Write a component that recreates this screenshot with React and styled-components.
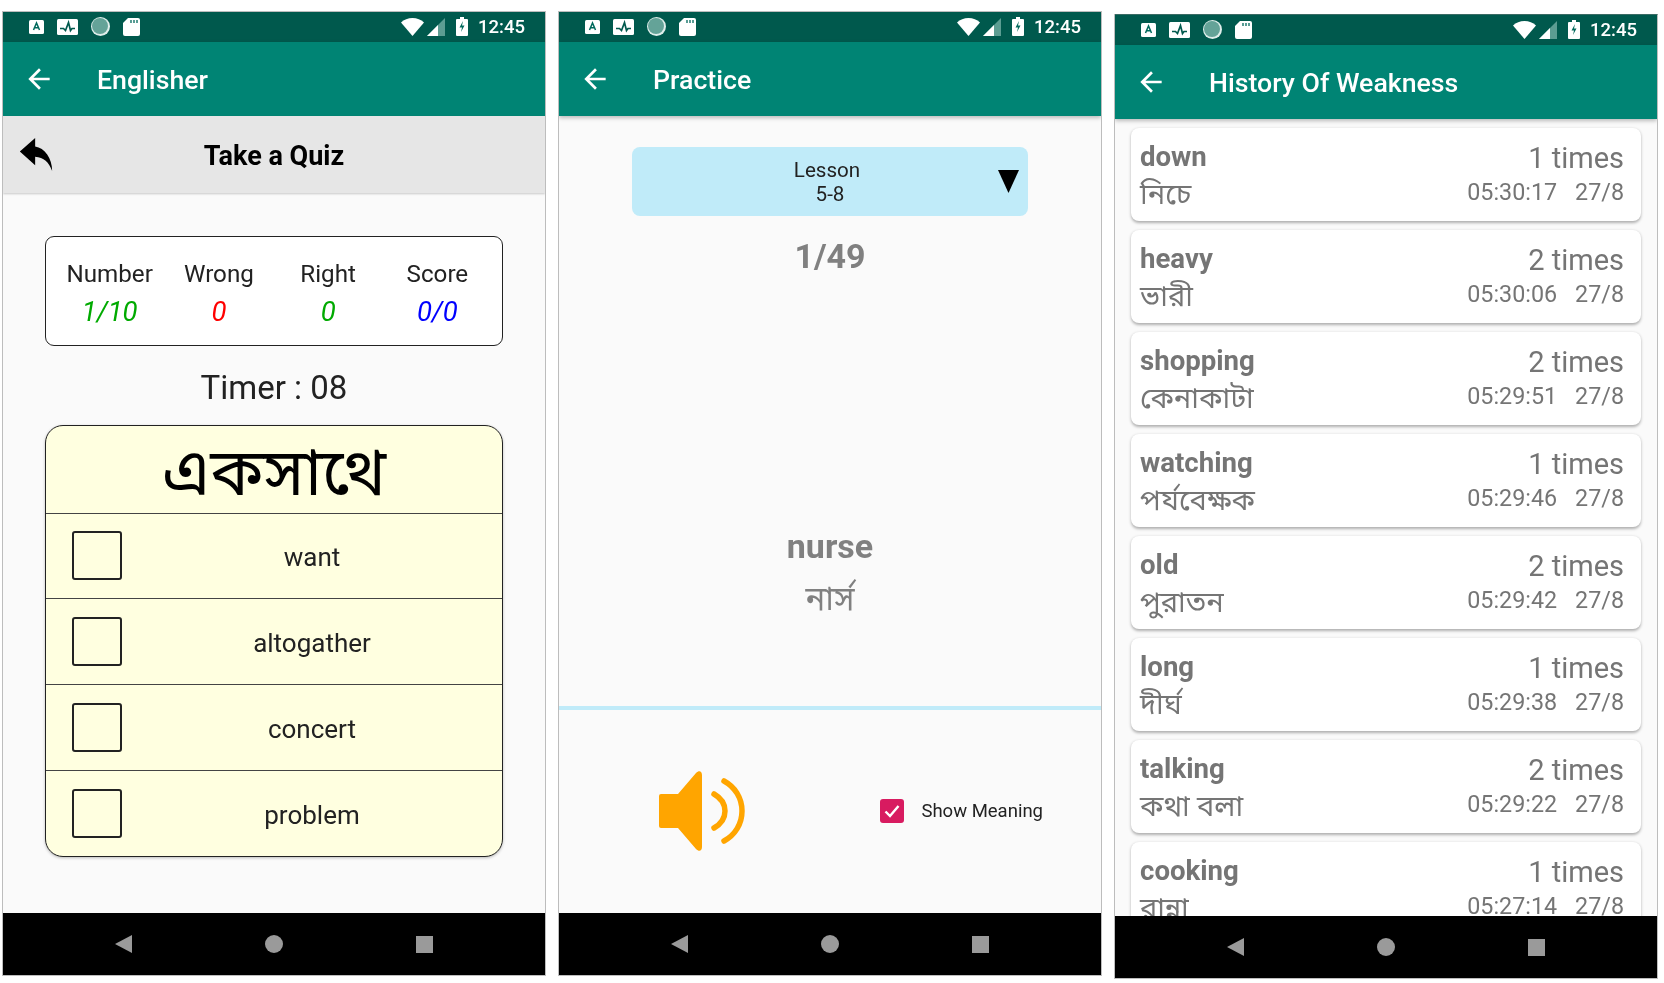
import React from 'react'
import styled, { createGlobalStyle } from 'styled-components'

const quizOptions = ['want', 'altogather', 'concert', 'problem']

const scoreColumns = [
  { label: 'Number', value: '1/10', color: '#00aa00' },
  { label: 'Wrong', value: '0', color: '#ff0000' },
  { label: 'Right', value: '0', color: '#00aa00' },
  { label: 'Score', value: '0/0', color: '#0000ff' },
]

const weakWords = [
  { word: 'down', meaning: 'নিচে', times: '1 times', clock: '05:30:17' },
  { word: 'heavy', meaning: 'ভারী', times: '2 times', clock: '05:30:06' },
  { word: 'shopping', meaning: 'কেনাকাটা', times: '2 times', clock: '05:29:51' },
  { word: 'watching', meaning: 'পর্যবেক্ষক', times: '1 times', clock: '05:29:46' },
  { word: 'old', meaning: 'পুরাতন', times: '2 times', clock: '05:29:42' },
  { word: 'long', meaning: 'দীর্ঘ', times: '1 times', clock: '05:29:38' },
  { word: 'talking', meaning: 'কথা বলা', times: '2 times', clock: '05:29:22' },
  { word: 'cooking', meaning: 'রান্না', times: '1 times', clock: '05:27:14' },
]

function StatusBar() {
  return (
    <StatusRow>
      <StatusIcons>
        <svg width="15" height="14" viewBox="0 0 15 14">
          <rect width="15" height="14" rx="1.5" fill="#fff" />
          <path d="M4.5 10 7.5 3l3 7M5.6 7.8h3.8" fill="none" stroke="#00695c" strokeWidth="1.5" />
        </svg>
        <svg width="21" height="16" viewBox="0 0 21 16">
          <rect width="21" height="16" rx="1.5" fill="#fff" />
          <path d="M3 9.500h3.500l2 2 3-8 2 8 1.500-2H18" fill="none" stroke="#00594d" strokeWidth="1.700" />
        </svg>
        <svg width="19" height="19" viewBox="0 0 19 19">
          <circle cx="9.5" cy="9.5" r="9.5" fill="#dfeeeb" />
          <circle cx="9" cy="9" r="8" fill="#64a398" />
        </svg>
        <svg width="17" height="18" viewBox="0 0 17 18">
          <path d="M5 0h10a2 2 0 0 1 2 2v14a2 2 0 0 1-2 2H2a2 2 0 0 1-2-2V5z" fill="#fff" />
          <path d="M8 2v3M11 2v3M14 2v3" stroke="#00695c" strokeWidth="1.3" />
        </svg>
      </StatusIcons>
      <StatusIcons $right>
        <svg width="23" height="18" viewBox="0 0 23 18">
          <path d="M0 4.5C3 1.700 7 0 11.500 0S20 1.700 23 4.500L11.500 18z" fill="#fff" />
        </svg>
        <svg width="18" height="18" viewBox="0 0 18 18">
          <path d="M18 0v18H0z" fill="#5c9d92" />
          <path d="M11 7v11H0z" fill="#fff" />
        </svg>
        <BatteryIcon width="12" height="19" viewBox="0 0 12 19">
          <path d="M4 0h4v2h3a1 1 0 0 1 1 1v15a1 1 0 0 1-1 1H1a1 1 0 0 1-1-1V3a1 1 0 0 1 1-1h3z" fill="#fff" />
          <path d="M7 4 3.500 10.500H6L5 15l3.500-6.500H6z" fill="#00695c" />
        </BatteryIcon>
        <Clock>12:45</Clock>
      </StatusIcons>
    </StatusRow>
  )
}

function AppBar({ title }) {
  return (
    <Toolbar>
      <svg width="32" height="32" viewBox="0 0 24 24" fill="#fff">
        <path d="M20 11H7.830l5.590-5.590L12 4l-8 8 8 8 1.410-1.410L7.830 13H20v-2z" />
      </svg>
      <ToolbarTitle>{title}</ToolbarTitle>
    </Toolbar>
  )
}

function NavBar() {
  return (
    <Nav>
      <svg width="17" height="18" viewBox="0 0 17 18">
        <path d="M17 0v18L0 9z" fill="#9a9a9a" />
      </svg>
      <NavDot />
      <NavSquare />
    </Nav>
  )
}

function QuizPhone() {
  return (
    <Phone>
      <StatusBar />
      <AppBar title="Englisher" />
      <SubBar>
        <ReplyIcon width="34" height="33" viewBox="0 0 95 97">
          <path d="M0 40 45 0v25c28 4 50 34 50 72-9-26-25-40-50-42v25z" fill="#000" />
        </ReplyIcon>
        Take a Quiz
      </SubBar>
      <QuizBody>
        <ScoreCard>
          {scoreColumns.map((col) => (
            <ScoreColumn key={col.label}>
              <ScoreLabel>{col.label}</ScoreLabel>
              <ScoreValue $color={col.color}>{col.value}</ScoreValue>
            </ScoreColumn>
          ))}
        </ScoreCard>
        <Timer>Timer : 08</Timer>
        <QuizCard>
          <QuizWord>একসাথে</QuizWord>
          {quizOptions.map((option) => (
            <OptionRow key={option}>
              <OptionBox />
              <OptionText>{option}</OptionText>
            </OptionRow>
          ))}
        </QuizCard>
      </QuizBody>
      <NavBar />
    </Phone>
  )
}

function PracticePhone() {
  return (
    <Phone>
      <StatusBar />
      <AppBar title="Practice" />
      <PracticeBody>
        <LessonSelect>
          <LessonText>
            Lesson
            <LessonRange>5-8</LessonRange>
          </LessonText>
          <svg width="21" height="23" viewBox="0 0 21 23">
            <path d="M0 0h21L10.500 23z" fill="#000" />
          </svg>
        </LessonSelect>
        <Counter>1/49</Counter>
        <WordBlock>
          <PracticeWord>nurse</PracticeWord>
          <PracticeMeaning>নার্স</PracticeMeaning>
        </WordBlock>
        <Divider />
        <PracticeFooter>
          <svg width="86" height="80" viewBox="0 0 86 80">
            <path
              d="M2 23h17L37 2c3-3 6-2 6 2v72c0 4-3 5-6 2L19 57H2a2 2 0 0 1-2-2V25a2 2 0 0 1 2-2z"
              fill="#ffa500"
            />
            <path
              d="M55 23c7 4 11 10 11 17s-4 13-11 17M65 10c11 6 18 17 18 30s-7 24-18 30"
              fill="none"
              stroke="#ffa500"
              strokeWidth="5.500"
              strokeLinecap="round"
            />
          </svg>
          <MeaningToggle>
            <CheckMark>
              <svg width="16" height="14" viewBox="0 0 16 14">
                <path d="M1.500 7.500 6 12l8.500-10" fill="none" stroke="#fff" strokeWidth="2.400" />
              </svg>
            </CheckMark>
            Show Meaning
          </MeaningToggle>
        </PracticeFooter>
      </PracticeBody>
      <NavBar />
    </Phone>
  )
}

function HistoryPhone() {
  return (
    <Phone $third>
      <StatusBar />
      <AppBar title="History Of Weakness" />
      <HistoryList>
        {weakWords.map((item) => (
          <HistoryCard key={item.word}>
            <HistoryLine>
              <HistoryWord>{item.word}</HistoryWord>
              <HistoryTimes>{item.times}</HistoryTimes>
            </HistoryLine>
            <HistoryLine>
              <HistoryMeaning>{item.meaning}</HistoryMeaning>
              <HistoryStamp>
                <span>{item.clock}</span>
                <span>27/8</span>
              </HistoryStamp>
            </HistoryLine>
          </HistoryCard>
        ))}
      </HistoryList>
      <NavBar />
    </Phone>
  )
}

export default function App() {
  return (
    <>
      <GlobalStyle />
      <Screens>
        <QuizPhone />
        <PracticePhone />
        <HistoryPhone />
      </Screens>
    </>
  )
}

const GlobalStyle = createGlobalStyle`
  html, body {
    margin: 0;
    padding: 0;
    background: #fff;
    font-family: Roboto, "Noto Sans", "Noto Sans Bengali", sans-serif;
  }
`

const Screens = styled.div`
  display: flex;
  align-items: flex-start;
  gap: 13px;
  width: 1664px;
  height: 983px;
  padding: 11px 0 0 3px;
  box-sizing: border-box;
  overflow: hidden;
  filter: blur(0.4px);
`

const Phone = styled.div`
  display: flex;
  flex-direction: column;
  flex: none;
  width: 543px;
  height: 965px;
  margin-top: ${(p) => (p.$third ? '3px' : '0')};
  background: #fafafa;
  border: 1px solid #bdbdbd;
  border-top-color: ${(p) => (p.$third ? '#3a6b64' : '#bdbdbd')};
  border-left-width: 0;
  box-sizing: border-box;
  box-shadow: -1px 0 0 #bdbdbd;
  overflow: hidden;
`

const StatusRow = styled.div`
  display: flex;
  justify-content: space-between;
  align-items: center;
  flex: none;
  height: 29.500px;
  padding: 0 20px 0 26px;
  background: #00594d;
`

const StatusIcons = styled.div`
  display: flex;
  align-items: center;
  gap: ${(p) => (p.$right ? '2.500px' : '13px')};
`

const BatteryIcon = styled.svg`
  margin: 0 8px 0 8.500px;
`

const Clock = styled.span`
  color: #fff;
  font-size: 18.500px;
  font-weight: 500;
`

const Toolbar = styled.div`
  display: flex;
  align-items: center;
  flex: none;
  position: relative;
  height: 74px;
  padding-left: 20px;
  background: #008474;
  box-shadow: 0 2px 4px rgba(0, 0, 0, 0.25);
`

const ToolbarTitle = styled.h1`
  margin: 2px 0 0 42px;
  color: #fff;
  font-size: 26.700px;
  font-weight: 500;
`

const Nav = styled.div`
  display: flex;
  justify-content: center;
  align-items: center;
  gap: 133px;
  flex: none;
  height: 62px;
  background: #000;
`

const NavDot = styled.div`
  width: 18px;
  height: 18px;
  border-radius: 50%;
  background: #9a9a9a;
`

const NavSquare = styled.div`
  width: 17px;
  height: 17px;
  background: #9a9a9a;
`

const SubBar = styled.div`
  display: flex;
  justify-content: center;
  align-items: center;
  flex: none;
  position: relative;
  height: 77px;
  padding-top: 4px;
  box-sizing: border-box;
  background: #e6e6e6;
  box-shadow: 0 1px 2px rgba(0, 0, 0, 0.2);
  color: #000;
  font-size: 27px;
  font-weight: 700;
`

const ReplyIcon = styled.svg`
  position: absolute;
  left: 16px;
  top: 22px;
`

const QuizBody = styled.div`
  flex: 1;
  display: flex;
  flex-direction: column;
  align-items: center;
  padding-top: 43px;
`

const ScoreCard = styled.div`
  display: flex;
  flex: none;
  width: 458px;
  height: 110px;
  padding: 0 10px 0 9px;
  background: #fff;
  border: 1.500px solid #222;
  border-radius: 9px;
  box-sizing: border-box;
`

const ScoreColumn = styled.div`
  flex: 1;
  display: flex;
  flex-direction: column;
  align-items: center;
  padding-top: 20px;
`

const ScoreLabel = styled.span`
  color: #222;
  font-size: 24.200px;
  line-height: 35px;
`

const ScoreValue = styled.span`
  color: ${(p) => p.$color};
  font-size: 27.500px;
  font-style: italic;
  line-height: 40px;
`

const Timer = styled.div`
  flex: none;
  height: 79px;
  color: #222;
  font-size: 33px;
  line-height: 84px;
`

const QuizCard = styled.div`
  display: flex;
  flex-direction: column;
  flex: none;
  width: 458px;
  height: 432px;
  background: #ffffe0;
  border: 1.500px solid #222;
  border-radius: 18px;
  box-sizing: border-box;
  box-shadow: 0 1px 3px rgba(0, 0, 0, 0.25);
  overflow: hidden;
`

const QuizWord = styled.div`
  flex: none;
  height: 87px;
  color: #000;
  font-size: 66px;
  line-height: 94px;
  text-align: center;
`

const OptionRow = styled.div`
  flex: 1;
  display: flex;
  align-items: center;
  padding-left: 26px;
  border-top: 1px solid #444;
`

const OptionBox = styled.div`
  flex: none;
  width: 50px;
  height: 49px;
  background: transparent;
  border: 2.500px solid #222;
  border-radius: 3px;
  box-sizing: border-box;
`

const OptionText = styled.span`
  flex: 1;
  padding-top: 3px;
  color: #222;
  font-size: 26px;
  text-align: center;
`

const PracticeBody = styled.div`
  flex: 1;
  display: flex;
  flex-direction: column;
  align-items: center;
`

const LessonSelect = styled.div`
  display: flex;
  align-items: center;
  margin-top: 31px;
  width: 396px;
  height: 69px;
  padding: 0 9px 0 0;
  background: #c0ebf9;
  border-radius: 8px;
  box-sizing: border-box;
`

const LessonText = styled.div`
  flex: 1;
  padding: 2px 0 0 24px;
  color: #222;
  font-size: 20.600px;
  line-height: 24px;
  text-align: center;
`

const LessonRange = styled.div`
  padding-left: 6px;
`

const Counter = styled.div`
  margin-top: 18px;
  color: #808080;
  font-size: 34px;
  font-weight: 700;
  line-height: 44px;
`

const WordBlock = styled.div`
  flex: 1;
  display: flex;
  flex-direction: column;
  justify-content: flex-end;
  align-items: center;
  padding-bottom: 83px;
`

const PracticeWord = styled.div`
  color: #808080;
  font-size: 34px;
  font-weight: 700;
`

const PracticeMeaning = styled.div`
  margin-top: 13px;
  color: #808080;
  font-size: 33px;
`

const Divider = styled.div`
  flex: none;
  width: 100%;
  height: 4px;
  background: #c0ebf9;
`

const PracticeFooter = styled.div`
  flex: none;
  display: flex;
  align-items: center;
  justify-content: space-between;
  width: 100%;
  height: 203px;
  padding: 0 58px 2px 100px;
  box-sizing: border-box;
`

const MeaningToggle = styled.div`
  display: flex;
  align-items: center;
  gap: 17px;
  color: #222;
  font-size: 18.500px;
`

const CheckMark = styled.div`
  display: flex;
  justify-content: center;
  align-items: center;
  width: 24px;
  height: 24px;
  background: #d81b60;
  border-radius: 3px;
`

const HistoryList = styled.div`
  flex: 1;
  display: flex;
  flex-direction: column;
  gap: 9px;
  min-height: 0;
  padding: 9px 16px 0 16px;
  overflow: hidden;
`

const HistoryCard = styled.div`
  flex: none;
  display: flex;
  flex-direction: column;
  gap: 5.500px;
  height: 93px;
  padding: 12px 17px 0 9px;
  background: #fff;
  border-radius: 8px;
  box-sizing: border-box;
  box-shadow: 0 1.500px 3px rgba(0, 0, 0, 0.3);
`

const HistoryLine = styled.div`
  display: flex;
  justify-content: space-between;
  align-items: center;
  height: 34px;
  color: #757575;
`

const HistoryWord = styled.span`
  font-size: 27.600px;
  font-weight: 700;
`

const HistoryTimes = styled.span`
  margin-top: 2px;
  font-size: 29px;
`

const HistoryMeaning = styled.span`
  font-size: 29px;
`

const HistoryStamp = styled.span`
  display: flex;
  gap: 18px;
  margin-bottom: 8px;
  font-size: 23.300px;
`
